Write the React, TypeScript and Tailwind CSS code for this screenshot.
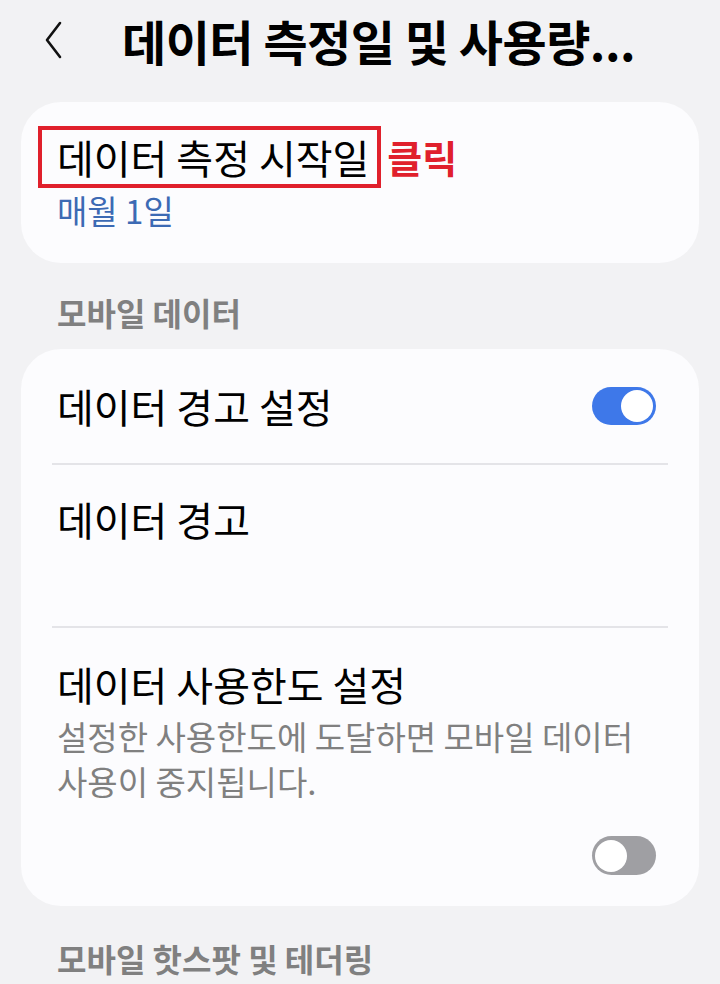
import React from "react";

function Toggle({ on }: { on: boolean }) {
  return on ? (
    <div className="w-[64px] h-[38px] rounded-full bg-[#3e78e9] flex items-center justify-end px-[3px]">
      <div className="w-[32px] h-[32px] rounded-full bg-white" />
    </div>
  ) : (
    <div className="w-[64px] h-[39px] rounded-full bg-[#9f9fa3] flex items-center justify-start px-[3px]">
      <div className="w-[32px] h-[32px] rounded-full bg-white" />
    </div>
  );
}

export default function App() {
  return (
    <div
      className="w-[720px] h-[984px] bg-[#f2f2f4] overflow-hidden text-black"
      style={{ fontFamily: '"Noto Sans CJK KR", "Noto Sans", sans-serif' }}
    >
      {/* Header */}
      <div className="flex items-center h-[80px] pl-[44px]">
        <svg width="20" height="38" viewBox="0 0 20 38" className="mr-[58px]">
          <path d="M16 2 L3 19 L16 36" fill="none" stroke="#111" strokeWidth="2.6" strokeLinecap="round" strokeLinejoin="round" />
        </svg>
        <div className="text-[48px] font-bold tracking-[-0.5px] leading-none">데이터 측정일 및 사용량...</div>
      </div>

      {/* Card 1 */}
      <div className="mx-[21px] mt-[22px] bg-[#fcfcfe] rounded-[40px] h-[161px] pt-[24px] px-[17px]">
        <div className="flex items-center">
          <div className="border-[4px] border-[#e0202c] h-[62px] pl-[15px] pr-[8px] flex items-center">
            <span className="text-[40px] leading-none">데이터 측정 시작일</span>
          </div>
          <span className="text-[38px] font-bold text-[#e0202c] ml-[6px] leading-none">클릭</span>
        </div>
        <div className="text-[33px] text-[#3c6ab4] pl-[19px] mt-[2px] leading-[40px]">매월 1일</div>
      </div>

      {/* Section label */}
      <div className="pl-[57px] pt-[29px] pb-[17px] text-[32px] font-bold text-[#808080] leading-[40px]">
        모바일 데이터
      </div>

      {/* Card 2 */}
      <div className="mx-[21px] bg-[#fcfcfe] rounded-[40px] h-[557px] px-[31px]">
        <div className="h-[114px] flex items-center justify-between pl-[5px] pr-[12px]">
          <span className="text-[40px] leading-none">데이터 경고 설정</span>
          <Toggle on />
        </div>
        <div className="h-[2px] bg-[#e4e4e8]" />
        <div className="h-[161px] pl-[5px] pt-[30px]">
          <div className="text-[40px] leading-[48px]">데이터 경고</div>
        </div>
        <div className="h-[2px] bg-[#e4e4e8]" />
        <div className="pl-[5px] pt-[32px] pr-[12px]">
          <div className="text-[40px] leading-[48px]">데이터 사용한도 설정</div>
          <div className="text-[33px] text-[#808080] leading-[45px] mt-[6px]">
            설정한 사용한도에 도달하면 모바일 데이터
            <br />
            사용이 중지됩니다.
          </div>
          <div className="flex justify-end mt-[32px]">
            <Toggle on={false} />
          </div>
        </div>
      </div>

      <div className="pl-[57px] pt-[32px] text-[32px] font-bold text-[#808080] leading-[40px]">
        모바일 핫스팟 및 테더링
      </div>
    </div>
  );
}
